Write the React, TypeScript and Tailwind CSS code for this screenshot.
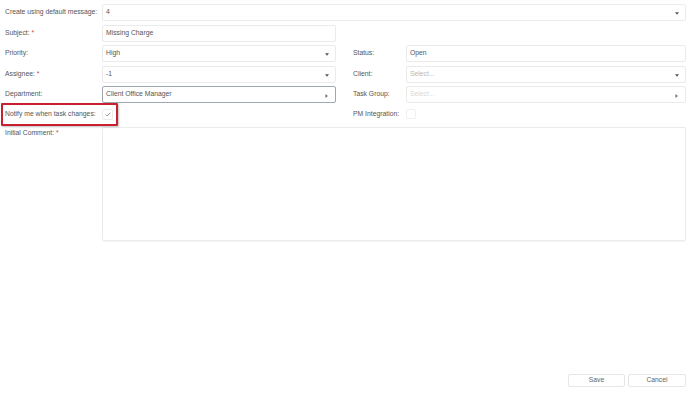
import React from "react";

const Caret = ({ dir = "down" }: { dir?: "down" | "right" }) =>
  dir === "down" ? (
    <svg width="4" height="3" viewBox="0 0 4 3" className="absolute right-[6px] top-[7px]">
      <path d="M0 0.3 L4 0.3 L2 2.8 Z" fill="#555" />
    </svg>
  ) : (
    <svg width="3" height="4" viewBox="0 0 3 4" className="absolute right-[7px] top-[6.5px]">
      <path d="M0.5 0 L2.8 2 L0.5 4 Z" fill="#666" />
    </svg>
  );

const Field = ({
  text,
  w,
  caret,
  placeholder,
  faint,
  dark,
}: {
  text: string;
  w?: string;
  caret?: "down" | "right";
  placeholder?: boolean;
  faint?: boolean;
  dark?: boolean;
}) => (
  <div
    className={`relative h-[17px] rounded-[2px] border bg-white pl-[3px] flex items-center ${
      dark ? "border-[#9ea7b1]" : "border-[#ebebeb]"
    } ${w ?? "flex-1"}`}
  >
    <span
      className={`text-[6.8px] leading-none ${
        faint ? "text-[#d8d8d8]" : placeholder ? "text-[#b8b8b8]" : "text-[#555]"
      }`}
    >
      {text}
    </span>
    {caret && <Caret dir={caret} />}
  </div>
);

const Label = ({ text, req, w }: { text: string; req?: boolean; w: string }) => (
  <div className={`${w} shrink-0 text-[6.8px] leading-none text-[#555]`}>
    {text}
    {req && <span className="text-[#d0453a]"> *</span>}
  </div>
);

export default function App() {
  return (
    <div
      className="w-[688px] h-[394px] bg-white relative overflow-hidden"
      style={{ fontFamily: '"Liberation Sans", Arial, sans-serif' }}
    >
      <div className="flex flex-col pt-[4px] pl-[5px] pr-[2px]">
        <div className="flex items-center h-[17px]">
          <Label text="Create using default message:" w="w-[97px]" />
          <Field text="4" caret="down" />
        </div>
        <div className="flex items-center h-[17px] mt-[3.5px]">
          <Label text="Subject:" req w="w-[97px]" />
          <Field text="Missing Charge" w="w-[234px]" />
        </div>
        <div className="flex items-center h-[17px] mt-[3.5px]">
          <Label text="Priority:" w="w-[97px]" />
          <Field text="High" caret="down" w="w-[234px]" />
          <div className="w-[17px]" />
          <Label text="Status:" w="w-[53px]" />
          <Field text="Open" />
        </div>
        <div className="flex items-center h-[17px] mt-[3.5px]">
          <Label text="Assignee:" req w="w-[97px]" />
          <Field text="-1" caret="down" w="w-[234px]" />
          <div className="w-[17px]" />
          <Label text="Client:" w="w-[53px]" />
          <Field text="Select..." placeholder caret="down" />
        </div>
        <div className="flex items-center h-[17px] mt-[3.5px]">
          <Label text="Department:" w="w-[97px]" />
          <Field text="Client Office Manager" caret="right" dark w="w-[234px]" />
          <div className="w-[17px]" />
          <Label text="Task Group:" w="w-[53px]" />
          <Field text="Select..." faint caret="right" />
        </div>
        <div className="flex items-center h-[22px]">
          <div className="w-[97px] shrink-0 flex items-center">
            <Label text="Notify me when task changes:" w="w-[97px]" />
          </div>
          <div className="w-[11px] h-[11px] rounded-[2px] border border-[#ebebeb] flex items-center justify-center">
            <svg width="6" height="5" viewBox="0 0 7 6">
              <path d="M0.8 3 L2.6 4.8 L6.2 1" fill="none" stroke="#6b7280" strokeWidth="0.9" />
            </svg>
          </div>
          <div className="w-[240px]" />
          <Label text="PM Integration:" w="w-[53px]" />
          <div className="w-[10px] h-[10px] rounded-[2px] border border-[#f0f0f0]" />
        </div>
        <div className="flex mt-[2px]">
          <div className="w-[97px] shrink-0 pt-[3px]">
            <Label text="Initial Comment:" req w="w-[97px]" />
          </div>
          <div className="flex-1 h-[114px] rounded-[2px] border border-[#ebebeb] shadow-[0_1px_1px_rgba(0,0,0,0.04)]" />
        </div>
      </div>
      <div className="absolute left-[1px] top-[103px] w-[117px] h-[23px] border-2 border-[#c8202f] rounded-[1px] shadow-[1px_1px_2px_rgba(0,0,0,0.25)]" />
      <div className="absolute right-[2px] top-[374px] flex gap-[3px]">
        <div className="w-[57px] h-[13px] border border-[#e6e6e6] rounded-[2px] flex items-center justify-center text-[6.8px] text-[#666]">
          Save
        </div>
        <div className="w-[58px] h-[13px] border border-[#e6e6e6] rounded-[2px] flex items-center justify-center text-[6.8px] text-[#666]">
          Cancel
        </div>
      </div>
    </div>
  );
}
